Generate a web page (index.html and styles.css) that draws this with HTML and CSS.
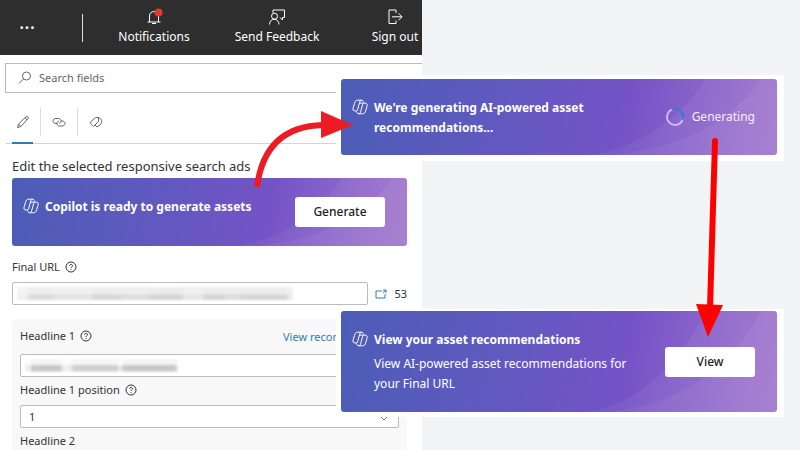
FILE: index.html
```html
<!DOCTYPE html>
<html lang="en">
<head>
<meta charset="utf-8">
<title>Copilot asset recommendations</title>
<link rel="stylesheet" href="styles.css">
</head>
<body>
<svg class="defs" aria-hidden="true">
  <symbol id="copilot" viewBox="0 0 16 16">
    <path d="M5.500 1.200H9.700C10.600 1.200 11 1.800 11.300 2.800M5.500 1.200C3.600 1.200 3 2.600 2.500 4.400L1.300 8.400C.6 10.600.8 11.900 2.700 11.900H4.200M9.700 1.200C8.500 1.200 8 2 7.700 3.200L5.800 10C5.300 11.500 5 11.900 4.200 11.900M7.500 4.100H13.300C15.200 4.100 15.500 5.600 14.900 7.600L13.700 11.600C13.200 13.400 12.500 14.800 10.500 14.800H6.600C5.300 14.800 5 13.600 4.700 12.500M6.600 14.800C7.700 14.800 8.200 14 8.600 12.800L10.500 6C10.900 4.700 11.300 4.100 12 4.100"/>
  </symbol>
  <symbol id="help" viewBox="0 0 12 12">
    <circle cx="6" cy="6" r="5"/>
    <path d="M4.500 4.800C4.500 3 7.500 3 7.500 4.700C7.500 5.700 6 5.800 6 7.100M6 8.200V9"/>
  </symbol>
  <g id="waves">
    <path d="M270 76C330 70 385 50 420 0H436V76Z"/>
    <path d="M250 76C310 66 345 30 365 0H436V76H250Z"/>
  </g>
</svg>
<main class="page">
  <section class="panel">
    <header class="topbar">
      <button class="more" aria-label="More">···</button>
      <span class="divider"></span>
      <button class="action notifications">
        <svg class="icon" viewBox="0 0 18 18"><path d="M4.500 14V8C4.500 2 13.500 2 13.500 8V14M2.500 14H15.500M7 15.500H11"/><circle class="dot" cx="13.500" cy="4.500" r="4"/></svg>
        <span>Notifications</span>
      </button>
      <button class="action feedback">
        <svg class="icon" viewBox="0 0 18 18"><path d="M5 5V2H16.500V9.500H14.500V12L12 9.500M1.500 16.500C1.500 9.500 11 9.500 11 16.500"/><circle cx="6.500" cy="8.200" r="3"/></svg>
        <span>Send Feedback</span>
      </button>
      <button class="action signout">
        <svg class="icon" viewBox="0 0 18 18"><path d="M10 5V2H3V15.500H10V12.500M6 8.800H16M12.500 5.300L16 8.800L12.500 12.300"/></svg>
        <span>Sign out</span>
      </button>
    </header>
    <label class="search">
      <svg class="glyph" viewBox="0 0 14 14"><circle cx="8.500" cy="5" r="4"/><path d="M5.500 8L1 12.500"/></svg>
      <input type="search" placeholder="Search fields" aria-label="Search fields">
    </label>
    <nav class="tabs">
      <button class="tab active" aria-label="Edit"><svg class="glyph" viewBox="0 0 14 14"><path d="M1.500 12.500L2.500 9L10 1.800C11.200.8 13 2.500 12 3.800L4.800 11.500ZM2.500 9L4.800 11.500M9 2.800L11.200 5"/></svg></button>
      <button class="tab" aria-label="Links"><svg class="glyph" viewBox="0 0 14 14"><path d="M5 8.500H4C0 8.500 0 3.500 4 3.500H6.500C10 3.500 9.500 8 7 8.500M9 6H10C14 6 14 11 10 11H7.500C4 11 4.500 6.500 7 6"/></svg></button>
      <button class="tab" aria-label="Assets"><svg class="glyph" viewBox="0 0 14 14"><path d="M1.500 7L6.500 2.500H9.500V6.500L4.500 11.500C3 10 1 8.500 1.500 7ZM9.500 2.500C13 3.500 13.500 7 11.500 9.500L8 12L6 10"/></svg></button>
    </nav>
    <div class="content">
      <h1 class="title">Edit the selected responsive search ads</h1>
      <div class="banner ready">
        <svg class="wave" viewBox="0 0 436 76" preserveAspectRatio="none"><use href="#waves"/></svg>
        <svg class="copilot"><use href="#copilot"/></svg>
        <div class="message"><strong>Copilot is ready to generate assets</strong></div>
        <button class="cta">Generate</button>
      </div>
      <label class="label final" for="url">Final URL <svg class="help"><use href="#help"/></svg></label>
      <div class="urlrow">
        <div class="field">
          <input id="url" type="text">
          <span class="redacted long"></span>
        </div>
        <a class="open" href="#" aria-label="Open URL"><svg viewBox="0 0 12 10"><path d="M7 2H1V9H10V5M8 1H11V4M11 1L8 4"/></svg></a>
        <span class="count">53</span>
      </div>
      <section class="headlines">
        <div class="labelrow">
          <label class="label" for="headline">Headline 1 <svg class="help"><use href="#help"/></svg></label>
          <a class="view" href="#">View recon</a>
        </div>
        <div class="field">
          <input id="headline" type="text">
          <span class="redacted short"></span>
        </div>
        <label class="label position" for="position">Headline 1 position <svg class="help"><use href="#help"/></svg></label>
        <div class="field">
          <select id="position"><option>1</option></select>
          <svg class="chevron" viewBox="0 0 10 6"><path d="M1 1L5 5L9 1"/></svg>
        </div>
        <p class="label second">Headline 2</p>
      </section>
    </div>
  </section>

  <div class="callout generating">
    <div class="banner">
      <svg class="wave" viewBox="0 0 436 76" preserveAspectRatio="none"><use href="#waves"/></svg>
      <svg class="copilot"><use href="#copilot"/></svg>
      <div class="message"><strong>We're generating AI-powered asset recommendations...</strong></div>
      <span class="status"><svg class="spinner" viewBox="0 0 20 20"><path class="track" d="M7 2.600A8 8 0 1 0 17.500 13"/><path class="bead" d="M9 2A8 8 0 0 1 18 11"/></svg>Generating</span>
    </div>
  </div>
  <div class="callout done">
    <div class="banner">
      <svg class="wave" viewBox="0 0 436 76" preserveAspectRatio="none"><use href="#waves"/></svg>
      <svg class="copilot"><use href="#copilot"/></svg>
      <div class="message"><strong>View your asset recommendations</strong><p>View AI-powered asset recommendations for your Final URL</p></div>
      <button class="cta">View</button>
    </div>
  </div>
  <svg class="arrows" viewBox="0 0 800 450" preserveAspectRatio="none" aria-hidden="true">
    <path class="curve" d="M257 187C262 148 283 126 323 125"/>
    <path class="head" d="M321 111L353 125L321 138Z"/>
    <path class="line" d="M715 141L710 308"/>
    <path class="tip" d="M696 304L723 305L708 337Z"/>
  </svg>
</main>
</body>
</html>
```
FILE: styles.css
```css
* { box-sizing: border-box; }
body { margin: 0; background: #f3f4f5; color: #333; font: 12px/20px "Noto Sans", sans-serif; }
button, input, select { font: inherit; color: inherit; margin: 0; }
button { border: 0; padding: 0; background: none; }
svg { display: block; flex: none; fill: none; stroke: currentColor; }
.defs { position: absolute; width: 0; height: 0; }
.page { position: relative; display: grid; grid-template-columns: 422fr 378fr; height: 100vh; overflow: hidden; }
.panel { min-width: 0; background: #fff; overflow: hidden; }

.topbar { display: flex; align-items: center; height: 55px; background: #2e2e2e; color: #fff; }
.more { width: 54px; flex: none; font-size: 20px; }
.divider { width: 1px; height: 28px; flex: none; margin-left: 28px; background: #ddd; }
.action { display: flex; flex: none; flex-direction: column; align-items: center; gap: 1px; white-space: nowrap; }
.icon { width: 18px; height: 18px; }
.notifications { width: 80px; margin-left: 31px; }
.feedback { width: 92px; margin-left: 37px; }
.signout { width: 52px; margin-left: 46px; }
.dot { fill: #e03a2f; stroke: none; }

.search { display: flex; align-items: center; gap: 7px; height: 30px; margin: 8px -2px 0 5px; padding-left: 12px; border: 1px solid #bbb; font-size: 11px; }
.search input { flex: 1; min-width: 0; padding: 0; border: 0; background: none; outline: 0; }
.search input::placeholder { color: #666; opacity: 1; }
.glyph { width: 14px; height: 14px; color: #666; }
.tabs { display: flex; align-items: center; height: 36px; margin: 15px 15px 0 6px; border-bottom: 1px solid #d5d5d5; }
.tab { display: flex; align-items: center; justify-content: center; width: 37px; height: 28px; margin-bottom: 8px; }
.tab + .tab { border-left: 1px solid #ddd; }
.tab.active { height: 36px; margin: 0 7px 0 6px; width: 21px; border-bottom: 2px solid #2f7cb5; padding-bottom: 6px; }

.content { padding: 0 15px 0 12px; }
.title { margin: 12px 0 2px; font-size: 13px; font-weight: 400; line-height: 20px; }
.banner { position: relative; display: flex; align-items: center; overflow: hidden; border-radius: 3px; padding: 0 22px 0 11px; color: #fff; background: linear-gradient(100deg, #4c5db6, #6059bf 35%, #7453c6 65%, #8f68cc 85%, #a274cc); }
.wave { position: absolute; inset: 0; width: 100%; height: 100%; fill: #fff; fill-opacity: .05; stroke: none; }
.copilot { position: relative; width: 16px; height: 16px; align-self: flex-start; margin-top: 20px; }
.message { position: relative; flex: 1; align-self: flex-start; margin: 19px 12px 0 6px; }
.message strong { display: block; }
.message p { margin: 4px 0 0; }
.cta { position: relative; width: 90px; height: 30px; border-radius: 3px; background: #fff; color: #222; font-weight: 500; }
.ready { height: 68px; }

.label { display: flex; align-items: center; gap: 5px; font-size: 11px; line-height: 16px; }
.help { width: 12px; height: 12px; }
.final { margin: 13px 0 7px; }
.urlrow { display: flex; align-items: center; gap: 7px; }
.urlrow .field { flex: 1; }
.field { position: relative; }
.field input, .field select { display: block; width: 100%; height: 23px; border: 1px solid #bbb; border-radius: 2px; background: #fff; padding: 0 8px; appearance: none; font-size: 11px; }
.redacted { position: absolute; left: 5px; top: 5px; height: 13px; filter: blur(1px); }
.long { width: 276px; background: linear-gradient(#f4f4f4c0 50%, #f4f4f400 60%), linear-gradient(90deg, #f0f0f0 0 3%, #dcdcdc 5% 12%, #e4e4e4 14% 27%, #d8d8d8 28% 36%, #dedede 38% 47%, #d5d5d5 49% 59%, #e6e6e6 61% 67%, #d6d6d6 68% 75%, #dedede 76% 80%, #d6d6d6 82% 97%, #f4f4f4); }
.short { width: 153px; background: linear-gradient(#fffc 45%, #fff0 50% 90%, #fffc), linear-gradient(90deg, #eee 0 3%, #c8c8c8 5% 23%, #eee 25% 29%, #d0d0d0 32% 60%, #e6e6e6 61% 63%, #c8c8c8 65% 98%, #eee); }
.open svg { width: 12px; height: 10px; color: #2f7cb5; }
.count { font-size: 11px; line-height: 16px; }
.headlines { margin: 14px 0 0; padding: 9px 8px; background: #f8f8f8; border-radius: 5px; }
.labelrow { display: flex; justify-content: space-between; margin-bottom: 10px; }
.view { color: #2f7cb5; text-decoration: none; width: 116px; white-space: nowrap; font-size: 11px; line-height: 18px; height: 16px; }
.position { margin: 5px 0 7px; }
.chevron { position: absolute; right: 10px; top: 10px; width: 10px; height: 6px; color: #777; }
.second { margin: 5px 0 0; }

.callout { position: absolute; left: 42%; right: 2%; padding: 4px 7px 6px 5px; background: #fff; }
.generating { top: 75px; }
.generating .banner { height: 76px; }
.done { top: 309px; padding-top: 2px; padding-bottom: 5px; }
.done .banner { height: 101px; }
.status { position: relative; display: flex; align-items: center; gap: 7px; color: #f3ecfb; }
.spinner { width: 20px; height: 20px; stroke-width: 2; }
.track { stroke: #cdb8ec; }
.bead { stroke: #2f7cd0; }
.arrows { position: absolute; inset: 0; width: 100%; height: 100%; pointer-events: none; }
.curve { stroke: #ed1c24; stroke-width: 6; }
.line { stroke: #f00; stroke-width: 6; stroke-linecap: round; }
.head { fill: #ed1c24; stroke: none; }
.tip { fill: #f00; stroke: none; }
```
